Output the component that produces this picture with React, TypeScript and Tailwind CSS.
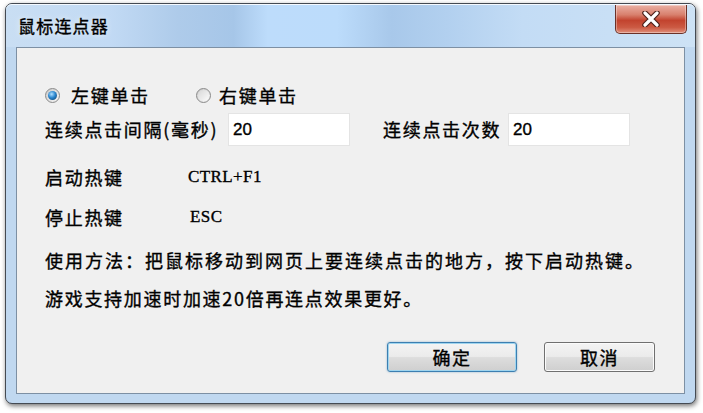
import React from "react";

function Radio(props: { checked: boolean }) {
  return (
    <span className="flex h-[15px] w-[15px] shrink-0 items-center justify-center rounded-full border border-[#8a8a8a] bg-gradient-to-br from-[#cbcbcb] to-[#f7f7f7]">
      {props.checked ? (
        <span className="h-[9px] w-[9px] rounded-full bg-[radial-gradient(circle_at_40%_35%,#b0e0ff_0%,#2a86cf_45%,#08365f_100%)]" />
      ) : (
        <span className="h-[11px] w-[11px] rounded-full bg-gradient-to-br from-[#d8d8d8] to-[#fbfbfb]" />
      )}
    </span>
  );
}

function CloseButton() {
  return (
    <div className="flex h-[29px] w-[72px] items-center justify-center rounded-b-[5px] border border-t-0 border-[#6b3128] bg-[linear-gradient(#eab0a4_0%,#d8806d_35%,#c2432e_55%,#cc5a43_80%,#e0907c_100%)] shadow-[inset_0_0_0_1px_rgba(255,255,255,0.35)]">
      <svg width="20" height="16" viewBox="0 0 20 16">
        <path d="M4 2 L16 14 M16 2 L4 14" stroke="#4a1f18" strokeWidth="5.5" strokeLinecap="round" />
        <path d="M4 2 L16 14 M16 2 L4 14" stroke="#ffffff" strokeWidth="3.2" strokeLinecap="round" />
      </svg>
    </div>
  );
}

function DialogButton(props: { label: string; primary?: boolean }) {
  return (
    <button
      type="button"
      className={
        props.primary
          ? "flex h-[30px] w-[130px] items-center justify-center rounded-[3px] border border-[#3c7fb1] bg-[linear-gradient(#f4f4f4_0%,#ebebeb_48%,#dddddd_52%,#cfcfcf_100%)] text-[18px] tracking-[1.5px] text-black shadow-[inset_0_0_0_1px_#9fd5ef,0_0_2px_rgba(60,127,177,0.6)]"
          : "flex h-[30px] w-[111px] items-center justify-center rounded-[3px] border border-[#707070] bg-[linear-gradient(#f4f4f4_0%,#ebebeb_48%,#dddddd_52%,#cfcfcf_100%)] text-[18px] tracking-[1.5px] text-black shadow-[inset_0_0_0_1px_#fbfbfb]"
      }
    >
      {props.label}
    </button>
  );
}

export default function App() {
  return (
    <div className="h-[413px] w-[703px] overflow-hidden bg-white pl-[5px] pt-[3px] font-['Noto_Sans_CJK_SC','Noto_Sans',sans-serif] text-black [-webkit-text-stroke:0.35px_#000]">
      <div className="flex h-[401px] w-[691px] flex-col rounded-[7px] border border-[#444a52] bg-[#c0d8f0] shadow-[1px_2px_5px_rgba(0,0,0,0.55)]">
        {/* title bar */}
        <div className="flex h-[43px] items-start justify-between rounded-t-[6px] border-t border-[#f4f9ff] bg-[linear-gradient(90deg,#c9def3_0%,#c2daf4_15%,#aecbea_25%,#a6c6e8_33%,#bddcfb_38%,#bcdcfb_48%,#a8c8ea_56%,#b2d0ef_64%,#c3dcf5_75%,#cde2f5_100%)] pl-[12px] pr-[8px]">
          <span className="mt-[9px] text-[17px] leading-[24px] tracking-[1.2px] text-black [text-shadow:0_0_6px_rgba(255,255,255,0.95)]">
            鼠标连点器
          </span>
          <CloseButton />
        </div>

        {/* client area */}
        <div className="mx-[10px] mb-[9px] flex flex-1 flex-col border border-[#7d90a4] bg-[#f0f0f0] pl-[28px] pr-[29px] pt-[30px] text-[18px] tracking-[1.7px]">
          <div className="flex h-[34px] items-center">
            <div className="flex w-[151px] items-center gap-[11px]">
              <Radio checked />
              <span>左键单击</span>
            </div>
            <div className="flex items-center gap-[8px]">
              <Radio checked={false} />
              <span>右键单击</span>
            </div>
          </div>

          <div className="flex h-[35px] items-center">
            <span className="w-[183px] whitespace-nowrap">连续点击间隔(毫秒)</span>
            <div className="flex h-[33px] w-[122px] items-center bg-white pl-[5px] font-['Liberation_Sans',sans-serif] text-[17px] tracking-normal shadow-[inset_0_0_0_1px_#e4e4e4]">
              20
            </div>
            <span className="ml-[33px] w-[125px] whitespace-nowrap">连续点击次数</span>
            <div className="flex h-[33px] w-[122px] items-center bg-white pl-[5px] font-['Liberation_Sans',sans-serif] text-[17px] tracking-normal shadow-[inset_0_0_0_1px_#e4e4e4]">
              20
            </div>
          </div>

          <div className="mt-[10px] flex h-[40px] items-center">
            <span className="w-[143px]">启动热键</span>
            <span className="font-['Liberation_Serif',serif] text-[17px] tracking-[0.4px]">CTRL+F1</span>
          </div>

          <div className="flex h-[40px] items-center">
            <span className="w-[145px]">停止热键</span>
            <span className="font-['Liberation_Serif',serif] text-[17px] tracking-[0.4px]">ESC</span>
          </div>

          <div className="mt-[3px] flex h-[40px] items-center whitespace-nowrap tracking-[2px]">
            使用方法：把鼠标移动到网页上要连续点击的地方，按下启动热键。
          </div>

          <div className="flex h-[36px] items-center whitespace-nowrap">
            游戏支持加速时加速20倍再连点效果更好。
          </div>

          <div className="mt-[26px] flex justify-end gap-[27px]">
            <DialogButton label="确定" primary />
            <DialogButton label="取消" />
          </div>
        </div>
      </div>
    </div>
  );
}
